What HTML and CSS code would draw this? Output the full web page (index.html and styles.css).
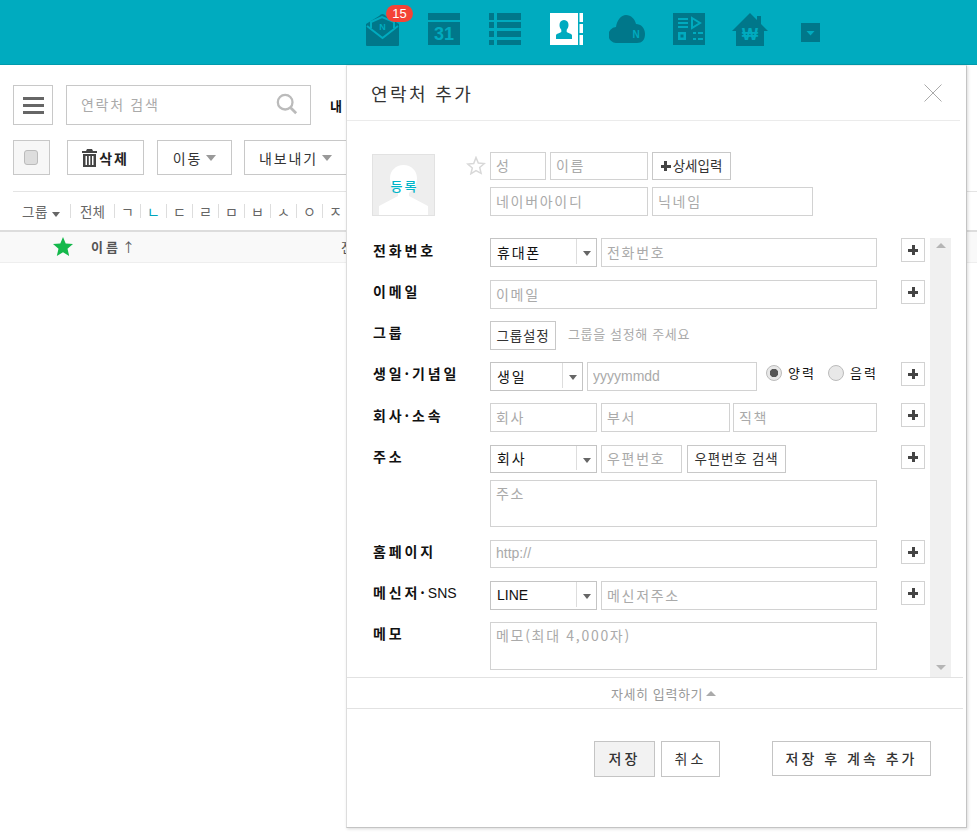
FILE: index.html
```html
<!DOCTYPE html>
<html lang="ko">
<head>
<meta charset="utf-8">
<title>연락처 추가</title>
<link rel="stylesheet" href="styles.css">
</head>
<body>
<header class="topbar">
  <div class="slot"><span class="badge">15</span>
    <svg width="33" height="33" viewBox="0 0 33 33"><path class="d" d="M0 11 L13 3 Q16.5 -1 20 3 L33 11 V32 Q33 33 32 33 H1 Q0 33 0 32Z"/><path class="ls" d="M1 13 L16.5 25 L32 13 M5 15 V9 L16 4 L28 9 V15"/><text class="lt" x="16.5" y="17" font-size="9" text-anchor="middle">N</text></svg></div>
  <div class="slot"><svg width="32" height="32" viewBox="0 0 32 32"><rect class="d" width="32" height="7"/><rect class="d" y="9" width="32" height="23"/><text class="lt" x="16" y="27" font-size="18" text-anchor="middle">31</text></svg></div>
  <div class="slot"><svg width="32" height="32" viewBox="0 0 32 32"><path class="d" d="M0 0h5v7H0zM8 0h24v7H8zM0 9h5v6H0zM8 9h24v6H8zM0 18h5v6H0zM8 18h24v6H8zM0 27h5v5H0zM8 27h24v5H8z"/></svg></div>
  <div class="slot"><svg width="33" height="32" viewBox="0 0 33 32"><path fill="#fff" d="M0 0h28v32H0zM29.500 0h3.500v9h-3.500zM29.500 11h3.500v9h-3.500zM29.500 22h3.500v10h-3.500z"/><path fill="#00abbf" d="M14 7c3 0 4.500 2.200 4.500 5 0 2-.8 3.600-1.800 4.800v2.200c1 1 5.300 1.500 5.300 3.500V26H6v-3.500c0-2 4.300-2.500 5.300-3.500v-2.200c-1-1.200-1.800-2.800-1.800-4.800 0-2.800 1.500-5 4.500-5z"/></svg></div>
  <div class="slot"><svg width="36" height="28" viewBox="0 0 36 28"><path class="d" d="M8 28a8 8 0 0 1-1-16C8 5 12 0 17 0c5 0 9 4 10 9 5 0 9 4 9 10s-3 9-8 9z"/><text class="lt" x="27" y="23" font-size="10" text-anchor="middle">N</text></svg></div>
  <div class="slot"><svg width="32" height="32" viewBox="0 0 32 32"><rect class="d" width="32" height="32"/><path class="lf" d="M5 5h10v2H5zM5 9h10v2H5zM5 13h10v2H5zM5 19h8v8H5zM7.500 21.500v3h3v-3zM20 19h3v2h-3zM25 19h5v2h-5zM20 25h3v2h-3zM25 25h5v2h-5z" fill-rule="evenodd"/><path class="ls" d="M19 5 L27 10 L19 15Z"/></svg></div>
  <div class="slot"><svg width="36" height="33" viewBox="0 0 36 33"><path class="d" d="M0 18 L18 0 L25 7 V3 H29 V11 L36 18 H32 V33 H4 V18Z"/><text class="lt" x="18" y="27" font-size="17" text-anchor="middle">₩</text></svg></div>
  <div class="slot"><svg class="drop" width="19" height="19" viewBox="0 0 19 19"><rect class="d" width="19" height="19"/><path class="lf" d="M5.500 8h8l-4 4.500z"/></svg></div>
</header>

<main class="main">
  <div class="bar-search">
    <button class="menu-btn" type="button"><span></span><span></span><span></span></button>
    <div class="search"><span>연락처 검색</span>
      <svg width="22" height="22" viewBox="0 0 24 24"><circle cx="10" cy="10" r="8" fill="none" stroke="#bbb" stroke-width="2.500"/><path d="M16 16 L22 22" stroke="#bbb" stroke-width="3"/></svg></div>
    <strong class="my">내</strong>
  </div>
  <div class="bar-actions">
    <div class="check-btn"><i></i></div>
    <button class="tool del" type="button"><svg width="15" height="18" viewBox="0 0 15 18"><path fill="#444" d="M5 0h5l1 2h4v2H0V2h4zM1 5h13v13H1zM3.500 7v9h1.500V7zM6.800 7v9h1.500V7zM10 7v9h1.500V7z" fill-rule="evenodd"/></svg><b>삭제</b></button>
    <button class="tool move" type="button">이동<i class="caret"></i></button>
    <button class="tool export" type="button">내보내기<i class="caret"></i></button>
  </div>
  <nav class="filter">
    <span class="f-group">그룹<i class="caret small"></i></span>
    <span class="f-all">전체</span>
    <span>ㄱ</span><span class="on">ㄴ</span><span>ㄷ</span><span>ㄹ</span><span>ㅁ</span><span>ㅂ</span><span>ㅅ</span><span>ㅇ</span><span>ㅈ</span>
  </nav>
  <div class="list-head">
    <svg width="20" height="19" viewBox="0 0 20 19"><path fill="#14b84b" d="M10 0l2.700 6.500 7.300.6-5.500 4.700 1.700 7.200L10 15.200 3.800 19l1.700-7.200L0 7.100l7.300-.6z"/></svg>
    <b>이름</b><span class="up">↑</span><span class="col-tel">전</span>
  </div>
</main>

<section class="panel">
  <div class="p-head"><h1>연락처 추가</h1>
    <svg width="18" height="18" viewBox="0 0 18 18"><path d="M.5.500l17 17M17.500.500l-17 17" stroke="#aaa" fill="none"/></svg></div>
  <div class="p-top">
    <div class="photo">
      <svg width="49" height="50" viewBox="0 0 49 50"><path fill="#fff" d="M24.500 0c8 0 13.500 6 13.500 13 0 7-4 12-8 15v3l19 10v9H0v-9l19-10v-3c-4-3-8-8-8-15 0-7 5.500-13 13.500-13z"/></svg>
      <span>등록</span>
    </div>
    <svg class="star" width="20" height="19" viewBox="0 0 20 19"><path fill="#fff" stroke="#d8d8d8" stroke-width="1.500" d="M10 1.500l2.300 5.500 6 .5-4.600 3.900 1.400 5.900L10 14.700l-5.100 3.100 1.400-5.900L1.700 8l6-.5z"/></svg>
    <div class="names">
      <div class="line"><input class="w56 h28" placeholder="성"><input class="w98 h28" placeholder="이름"><button class="btn w79 h28" type="button"><i class="mini-plus"></i>상세입력</button></div>
      <div class="line"><input class="w158" placeholder="네이버아이디"><input class="w161" placeholder="닉네임"></div>
    </div>
  </div>
  <div class="p-scroll">
    <div class="rows">
      <div class="row lg"><label>전화번호</label><div class="fields"><div class="sel w107"><span>휴대폰</span></div><input class="grow" placeholder="전화번호"></div><button class="plus" type="button"></button></div>
      <div class="row"><label>이메일</label><div class="fields"><input class="grow" placeholder="이메일"></div><button class="plus" type="button"></button></div>
      <div class="row"><label>그룹</label><div class="fields"><button class="btn w66 tight" type="button">그룹설정</button><span class="hint">그룹을 설정해 주세요</span></div></div>
      <div class="row"><label>생일·기념일</label><div class="fields"><div class="sel w93"><span>생일</span></div><input class="w170 lat" placeholder="yyyymmdd">
        <span class="radio on"></span><span class="rtxt">양력</span><span class="radio"></span><span class="rtxt">음력</span></div><button class="plus" type="button"></button></div>
      <div class="row lg"><label>회사·소속</label><div class="fields tri"><input class="w107" placeholder="회사"><input class="w129" placeholder="부서"><input class="grow" placeholder="직책"></div><button class="plus" type="button"></button></div>
      <div class="row addr"><label>주소</label><div class="fields wrap"><div class="sel w107 h28"><span>회사</span></div><input class="w81 h28" placeholder="우편번호"><button class="btn w99 h28 tight" type="button">우편번호 검색</button><textarea class="full h47" placeholder="주소"></textarea></div><button class="plus" type="button"></button></div>
      <div class="row"><label>홈페이지</label><div class="fields"><input class="grow h28 lat" placeholder="http://"></div><button class="plus" type="button"></button></div>
      <div class="row"><label>메신저·<span class="sns">SNS</span></label><div class="fields"><div class="sel w107 lat"><span>LINE</span></div><input class="grow" placeholder="메신저주소"></div><button class="plus" type="button"></button></div>
      <div class="row"><label>메모</label><div class="fields"><textarea class="full h48" placeholder="메모(최대 4,000자)"></textarea></div></div>
    </div>
    <div class="scrollbar"><i class="tri-up"></i><i class="tri-down"></i></div>
  </div>
  <div class="toggle">자세히 입력하기<i class="tri-small"></i></div>
  <div class="p-foot">
    <button class="f-btn save" type="button">저장</button>
    <button class="f-btn cancel" type="button">취소</button>
    <button class="f-btn more" type="button">저장 후 계속 추가</button>
  </div>
</section>
</body>
</html>
```

FILE: styles.css
```css
* { box-sizing: border-box; }
html, body { margin: 0; height: 100%; overflow: hidden; }
body {
  font-family: "Noto Sans CJK KR", "Liberation Sans", sans-serif;
  font-size: 14px;
  color: #222;
  background: #fff;
}
button, input, textarea { font: inherit; margin: 0; }
button { background: #fff; cursor: pointer; }

/* top bar */
.topbar {
  height: 65px;
  background: #00abbf;
  border-bottom: 1px solid #009aac;
  display: flex;
  align-items: center;
  padding: 0 0 6px 352px;
}
.slot {
  position: relative;
  width: 61.200px;
  display: flex;
  justify-content: center;
}
.drop { margin-top: 6px; }
.d { fill: #00778a; }
.lf { fill: #00abbf; }
.ls { fill: none; stroke: #00abbf; stroke-width: 2; }
.lt { fill: #00abbf; font-family: "Liberation Sans", sans-serif; font-weight: 700; }
.badge {
  position: absolute;
  left: 34px;
  top: -8px;
  width: 27px;
  height: 17px;
  border-radius: 9px;
  background: #f44336;
  color: #fff;
  font: 13px/17px "Liberation Sans", sans-serif;
  text-align: center;
  z-index: 1;
}

/* left list */
.main { padding-top: 20px; }
.bar-search {
  display: flex;
  align-items: center;
  height: 40px;
  margin-left: 13px;
}
.menu-btn {
  width: 40px;
  height: 40px;
  border: 1px solid #c8c8c8;
  display: flex;
  flex-direction: column;
  justify-content: center;
  align-items: center;
  gap: 4px;
  padding: 0;
}
.menu-btn span { display: block; width: 21px; height: 3px; background: #666; }
.search {
  width: 245px;
  height: 40px;
  margin-left: 13px;
  border: 1px solid #c8c8c8;
  display: flex;
  align-items: center;
  justify-content: space-between;
  padding: 0 12px 2px 14px;
  color: #aaa;
  letter-spacing: 1.700px;
}
.my { margin-left: 19px; color: #111; font-size: 13px; white-space: nowrap; }
.bar-actions {
  display: flex;
  height: 36px;
  margin: 15px 0 0 13px;
}
.check-btn {
  width: 37px;
  height: 35px;
  border: 1px solid #c8c8c8;
  background: #f7f7f7;
  display: flex;
  align-items: center;
  justify-content: center;
  padding-right: 2px;
}
.check-btn i {
  width: 14px;
  height: 15px;
  border: 1px solid #bbb;
  border-radius: 3px;
  background: #ddd;
}
.tool {
  height: 35px;
  border: 1px solid #c8c8c8;
  color: #333;
  letter-spacing: 1.900px;
  display: flex;
  align-items: center;
  justify-content: center;
  padding: 0;
}
.del { width: 77px; margin-left: 17px; gap: 2px; color: #222; }
.move { width: 75px; margin-left: 13px; }
.export { width: 130px; margin-left: 12px; justify-content: flex-start; padding-left: 14px; }
.caret {
  display: inline-block;
  width: 0;
  height: 0;
  margin-left: 4px;
  border: 5px solid transparent;
  border-top: 6px solid #999;
  border-bottom: 0;
}
.caret.small { margin-left: 4px; border-width: 4px; border-top: 5px solid #666; border-bottom: 0; }
.filter {
  margin: 15px 0 0 13px;
  height: 39px;
  border-top: 1px solid #e4e4e4;
  display: flex;
  align-items: center;
  color: #666;
  font-size: 13px;
}
.filter span {
  width: 26px;
  height: 14px;
  line-height: 14px;
  text-align: center;
  border-left: 1px solid #ddd;
  font-size: 14px;
}
.filter .on { color: #00a5bb; }
.filter .f-group { width: 57px; border: 0; font-size: 13.500px; letter-spacing: .6px; text-align: left; padding-left: 9px; white-space: nowrap; }
.filter .f-all { width: 44px; font-size: 13.500px; }
.list-head {
  height: 33px;
  border-top: 2px solid #ddd;
  border-bottom: 1px solid #eee;
  background: #f9f9f9;
  display: flex;
  align-items: center;
  padding: 0 0 2px 53px;
  color: #555;
  font-size: 13px;
}
.list-head b { margin-left: 18px; letter-spacing: 3px; }
.up { margin-left: 1px; }
.col-tel { margin-left: 206px; white-space: nowrap; }

/* panel */
.panel {
  position: absolute;
  left: 346px;
  top: 65px;
  width: 621px;
  height: 763px;
  background: #fff;
  border: 1px solid #c4c4c4;
  border-left-color: #ddd;
  border-top-color: #eee;
  box-shadow: 1px 1px 3px rgba(0,0,0,.15);
}
.p-head {
  height: 55px;
  margin-right: 6px;
  border-bottom: 1px solid #ebebeb;
  display: flex;
  align-items: center;
  justify-content: space-between;
  padding: 0 18px 0 24px;
}
.p-head h1 {
  margin: 0;
  font-size: 18px;
  font-weight: 400;
  letter-spacing: 2.400px;
  color: #333;
  line-height: 1;
}
.p-top {
  height: 117px;
  padding: 31px 0 0 25px;
  display: flex;
  align-items: flex-start;
}
.photo {
  position: relative;
  width: 63px;
  height: 62px;
  margin-top: 2px;
  background: #eee;
  border: 1px solid #e2e2e2;
  display: flex;
  justify-content: center;
  align-items: flex-end;
}
.photo svg { display: block; }
.photo span {
  position: absolute;
  left: 0;
  right: 0;
  top: 22px;
  padding-left: 2px;
  text-align: center;
  color: #00b4c8;
  font-size: 13px;
  font-weight: 500;
  line-height: 18px;
  letter-spacing: 2px;
}
.star { margin: 4px 4px 0 31px; flex: none; }
.names { display: flex; flex-direction: column; gap: 7px; }
.line { display: flex; gap: 4px; }
input, textarea {
  height: 29px;
  border: 1px solid #d2d2d2;
  border-radius: 0;
  background: #fff;
  padding: 0 5px 2px;
  font-size: 14px;
  letter-spacing: 1.700px;
  color: #222;
  outline: none;
  min-width: 0;
  flex: none;
}
input.grow { flex: 1; }
textarea { padding-top: 2px; resize: none; display: block; }
::placeholder { color: #aaa; opacity: 1; }
.btn {
  height: 29px;
  border: 1px solid #c8c8c8;
  padding: 0 0 2px;
  color: #333;
  font-size: 13.500px;
  white-space: nowrap;
  flex: none;
}
.tight { letter-spacing: .8px; }
.mini-plus {
  display: inline-block;
  width: 10px;
  height: 10px;
  margin-right: 2px;
  background:
    linear-gradient(#444,#444) center/10px 3px no-repeat,
    linear-gradient(#444,#444) center/3px 10px no-repeat;
}
.w56 { width: 56px; }
.w66 { width: 66px; }
.w79 { width: 79px; }
.w81 { width: 81px; }
.w93 { width: 93px; }
.w98 { width: 98px; }
.w99 { width: 99px; }
.w107 { width: 107px; }
.w129 { width: 129px; }
.w158 { width: 158px; }
.w161 { width: 161px; }
.w170 { width: 170px; }
.grow { flex: 1; }
.full { width: 100%; }

.p-scroll { display: flex; height: 439px; }
.rows { width: 583px; padding-left: 25px; }
.row { display: flex; height: 41px; }
.row.lg { height: 42px; }
.row.addr { height: 95px; }
.row label {
  width: 118px;
  padding-left: 1px;
  font-weight: 700;
  font-size: 14px;
  line-height: 22px;
  letter-spacing: 2.900px;
  color: #111;
  white-space: nowrap;
}
.row.lg label { line-height: 24px; }
.row label .sns { letter-spacing: 0; font-weight: 400; font-family: "Liberation Sans", sans-serif; }
.fields {
  width: 387px;
  display: flex;
  align-items: flex-start;
  gap: 4px;
}
.fields.tri .grow { margin-left: -1px; }
.fields.wrap { flex-wrap: wrap; column-gap: 4px; row-gap: 7px; align-content: flex-start; }
.fields.wrap .btn { margin-left: 1px; }
.sel {
  height: 29px;
  border: 1px solid #c4c4c4;
  background: #fff;
  display: flex;
  align-items: center;
  flex: none;
  position: relative;
  padding: 0 0 2px 6px;
  color: #111;
  letter-spacing: 1.800px;
}
.sel::before {
  content: "";
  position: absolute;
  right: 19px;
  top: 0;
  bottom: 2px;
  width: 1px;
  background: #ddd;
}
.sel::after {
  content: "";
  position: absolute;
  right: 5px;
  top: 12px;
  border: 4px solid transparent;
  border-top: 5px solid #666;
  border-bottom: 0;
}
input.lat, .sel.lat {
  font-family: "Liberation Sans", sans-serif;
  letter-spacing: 0;
}
.hint {
  margin-left: 8px;
  color: #aaa;
  font-size: 13px;
  line-height: 26px;
  letter-spacing: .650px;
  white-space: nowrap;
}
.radio {
  flex: none;
  width: 16px;
  height: 16px;
  margin: 3px 0 0;
  border-radius: 50%;
  border: 1px solid #bbb;
  background: #e8e8e8;
}
.radio.on { margin-left: 5px; background: radial-gradient(circle, #555 0 4px, #e8e8e8 4.500px); }
.rtxt {
  margin: 0 8px 0 2px;
  font-size: 13px;
  line-height: 22px;
  letter-spacing: 2px;
  color: #111;
  white-space: nowrap;
}
.plus {
  flex: none;
  width: 24px;
  height: 24px;
  margin-left: 24px;
  border: 1px solid #d2d2d2;
  padding: 0;
  background:
    linear-gradient(#444,#444) center/10px 3px no-repeat,
    linear-gradient(#444,#444) center/3px 10px no-repeat,
    #fff;
}
.scrollbar {
  width: 21px;
  background: #f0f0f0;
  position: relative;
}
.tri-up, .tri-down { position: absolute; left: 6px; border: 5px solid transparent; }
.tri-up { top: 5px; border-top: 0; border-bottom: 5px solid #b5b5b5; }
.tri-down { bottom: 7px; border-bottom: 0; border-top: 5px solid #b5b5b5; }
.toggle {
  height: 32px;
  margin-right: 3px;
  border-top: 1px solid #e2e2e2;
  border-bottom: 1px solid #e2e2e2;
  display: flex;
  align-items: center;
  justify-content: center;
  padding-left: 17px;
  color: #999;
  font-size: 13px;
  letter-spacing: .600px;
}
.tri-small {
  margin-left: 3px;
  border: 5px solid transparent;
  border-top: 0;
  border-bottom: 5px solid #aaa;
}
.p-foot {
  display: flex;
  align-items: flex-start;
  padding: 32px 0 0 247px;
}
.f-btn {
  height: 36px;
  padding: 0 0 2px;
  border: 1px solid #c4c4c4;
  color: #333;
  letter-spacing: 3px;
  white-space: nowrap;
}
.save { width: 61px; background: #f2f2f2; font-weight: 500; }
.cancel { width: 59px; margin-left: 6px; }
.more { width: 159px; height: 35px; margin-left: 52px; font-weight: 500; }

.h28 { height: 28px; }
.h47 { height: 47px; }
.h48 { height: 48px; }
```
